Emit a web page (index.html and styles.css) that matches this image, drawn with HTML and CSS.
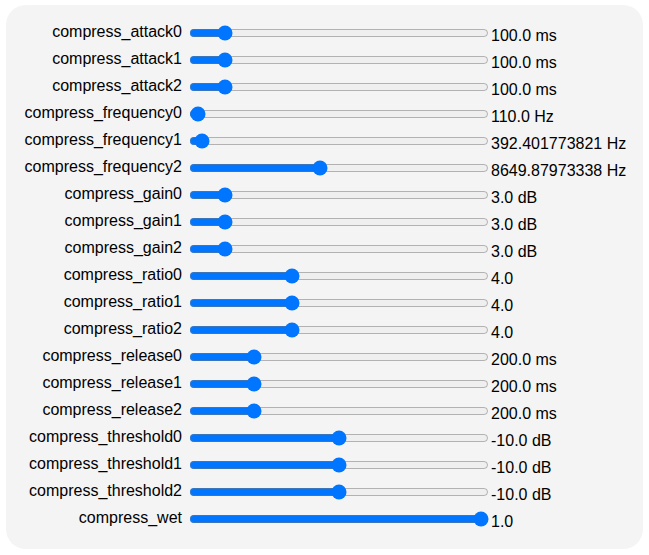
FILE: index.html
```html
<!DOCTYPE html>
<html>
<head>
<meta charset="utf-8">
<link rel="stylesheet" href="styles.css">
</head>
<body>
<div class="panel">
  <div class="row"><label class="name">compress_attack0</label><input class="slider" type="range" min="0" max="1000" step="any" value="100"><span class="val">100.0 ms</span></div>
  <div class="row"><label class="name">compress_attack1</label><input class="slider" type="range" min="0" max="1000" step="any" value="100"><span class="val">100.0 ms</span></div>
  <div class="row"><label class="name">compress_attack2</label><input class="slider" type="range" min="0" max="1000" step="any" value="100"><span class="val">100.0 ms</span></div>
  <div class="row"><label class="name">compress_frequency0</label><input class="slider" type="range" min="20" max="20000" step="any" value="110"><span class="val">110.0 Hz</span></div>
  <div class="row"><label class="name">compress_frequency1</label><input class="slider" type="range" min="20" max="20000" step="any" value="392.401773821"><span class="val">392.401773821 Hz</span></div>
  <div class="row"><label class="name">compress_frequency2</label><input class="slider" type="range" min="20" max="20000" step="any" value="8649.87973338"><span class="val">8649.87973338 Hz</span></div>
  <div class="row"><label class="name">compress_gain0</label><input class="slider" type="range" min="0" max="30" step="any" value="3"><span class="val">3.0 dB</span></div>
  <div class="row"><label class="name">compress_gain1</label><input class="slider" type="range" min="0" max="30" step="any" value="3"><span class="val">3.0 dB</span></div>
  <div class="row"><label class="name">compress_gain2</label><input class="slider" type="range" min="0" max="30" step="any" value="3"><span class="val">3.0 dB</span></div>
  <div class="row"><label class="name">compress_ratio0</label><input class="slider" type="range" min="1" max="10" step="any" value="4"><span class="val">4.0</span></div>
  <div class="row"><label class="name">compress_ratio1</label><input class="slider" type="range" min="1" max="10" step="any" value="4"><span class="val">4.0</span></div>
  <div class="row"><label class="name">compress_ratio2</label><input class="slider" type="range" min="1" max="10" step="any" value="4"><span class="val">4.0</span></div>
  <div class="row"><label class="name">compress_release0</label><input class="slider" type="range" min="0" max="1000" step="any" value="200"><span class="val">200.0 ms</span></div>
  <div class="row"><label class="name">compress_release1</label><input class="slider" type="range" min="0" max="1000" step="any" value="200"><span class="val">200.0 ms</span></div>
  <div class="row"><label class="name">compress_release2</label><input class="slider" type="range" min="0" max="1000" step="any" value="200"><span class="val">200.0 ms</span></div>
  <div class="row"><label class="name">compress_threshold0</label><input class="slider" type="range" min="-20" max="0" step="any" value="-10"><span class="val">-10.0 dB</span></div>
  <div class="row"><label class="name">compress_threshold1</label><input class="slider" type="range" min="-20" max="0" step="any" value="-10"><span class="val">-10.0 dB</span></div>
  <div class="row"><label class="name">compress_threshold2</label><input class="slider" type="range" min="-20" max="0" step="any" value="-10"><span class="val">-10.0 dB</span></div>
  <div class="row"><label class="name">compress_wet</label><input class="slider" type="range" min="0" max="1" step="any" value="1"><span class="val">1.0</span></div>
</div>
</body>
</html>
```
FILE: styles.css
```css
html, body {
  margin: 0;
  padding: 0;
  background: #ffffff;
}
body {
  font-family: "Liberation Sans", Arial, sans-serif;
  font-size: 16px;
  color: #000;
}
.panel {
  margin: 5px 0 0 6px;
  width: 637px;
  height: 544px;
  box-sizing: border-box;
  background: #f4f4f4;
  border-radius: 20px;
  padding-top: 14px;
  display: flex;
  flex-direction: column;
}
.row {
  display: flex;
  align-items: flex-start;
  height: 27px;
}
.name {
  width: 176px;
  text-align: right;
  line-height: 18px;
  padding-top: 4px;
  flex: none;
}
.slider {
  width: 300px;
  margin: 6px 2px 0 7px;
  flex: none;
}
.val {
  line-height: 18px;
  padding-top: 8px;
  white-space: nowrap;
}
```
